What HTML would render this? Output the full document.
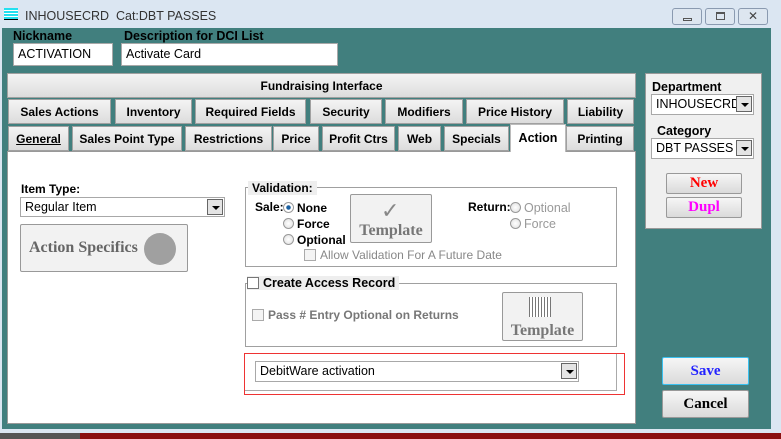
<!DOCTYPE html><html><head><style>
*{box-sizing:border-box}body{margin:0;width:781px;height:439px;overflow:hidden;background:#dbe6f2;font-family:"Liberation Sans",sans-serif;font-size:12px;position:relative}
.a{position:absolute}
.b{font-weight:bold}
.tab{position:absolute;height:25px;background:linear-gradient(#f4f4f4,#dcdcdc);border:1px solid #a0a0a0;font-weight:bold;font-size:12px;text-align:center;line-height:25px;color:#000;white-space:nowrap}
.inp{position:absolute;background:#fff;border:1px solid #a8a8a8;font-size:12.5px;padding-left:4px;line-height:18px}
.dd{position:absolute;right:1px;top:1px;width:16px;height:16px;border:1px solid #666;background:#e4e4e4}
.dd:after{content:"";position:absolute;left:4px;top:6px;border-left:4px solid transparent;border-right:4px solid transparent;border-top:4px solid #000}
.btn{position:absolute;border:1px solid #999;border-radius:2px;background:linear-gradient(#f6f6f6,#dadada);font-family:"Liberation Serif",serif;font-weight:bold;text-align:center}
.rad{display:inline-block;width:11px;height:11px;border-radius:50%;border:1px solid #999;background:radial-gradient(#fff,#ddd);vertical-align:-1px;margin-right:3px}
.chk{display:inline-block;width:12px;height:12px;border:1px solid #aaa;background:#f4f4f4;vertical-align:-2px;margin-right:4px}
.grp{position:absolute;border:1px solid #a0a0a0}
</style></head><body>
<div class="a" style="left:4px;top:8px;width:14px;height:12px;background:repeating-linear-gradient(#22e0f0 0 2px,#fff 2px 3px);border-bottom:1px solid #000"></div>
<div class="a" style="left:25px;top:9px;font-size:12.5px;color:#333">INHOUSECRD&nbsp; Cat:DBT PASSES</div>
<div class="a" style="left:672px;top:8px;width:30px;height:17px;border:1px solid #8a9ab0;border-radius:3px;background:#dde6f0"><div class="a" style="left:10px;top:9px;width:9px;height:3px;border:1px solid #555"></div></div>
<div class="a" style="left:705px;top:8px;width:30px;height:17px;border:1px solid #8a9ab0;border-radius:3px;background:#dde6f0"><div class="a" style="left:10px;top:3px;width:9px;height:8px;border:1px solid #555;border-top-width:2px"></div></div>
<div class="a" style="left:738px;top:8px;width:30px;height:17px;border:1px solid #8a9ab0;border-radius:3px;background:#dde6f0;text-align:center;font-size:12px;line-height:15px;color:#444">✕</div>
<div class="a" style="left:2px;top:28px;width:769px;height:401px;background:#417f7e"></div>
<div class="a" style="left:0;top:433px;width:781px;height:6px;background:#8a1010"></div>
<div class="a" style="left:0;top:433px;width:80px;height:6px;background:#555"></div>
<div class="a b" style="left:13px;top:29px;font-size:12.5px">Nickname</div>
<div class="a b" style="left:124px;top:29px;font-size:12.5px">Description for DCI List</div>
<div class="inp" style="left:13px;top:43px;width:100px;height:23px;line-height:21px">ACTIVATION</div>
<div class="inp" style="left:121px;top:43px;width:217px;height:23px;line-height:21px">Activate Card</div>
<div class="tab" style="left:7px;top:73px;width:629px;height:25px">Fundraising Interface</div>
<div class="tab" style="left:8px;top:99px;width:103px">Sales Actions</div>
<div class="tab" style="left:115px;top:99px;width:77px">Inventory</div>
<div class="tab" style="left:195px;top:99px;width:111px">Required Fields</div>
<div class="tab" style="left:310px;top:99px;width:72px">Security</div>
<div class="tab" style="left:385px;top:99px;width:78px">Modifiers</div>
<div class="tab" style="left:466px;top:99px;width:98px">Price History</div>
<div class="tab" style="left:567px;top:99px;width:67px">Liability</div>
<div class="tab" style="left:8px;top:126px;width:61px;text-decoration:underline">General</div>
<div class="tab" style="left:72px;top:126px;width:110px">Sales Point Type</div>
<div class="tab" style="left:185px;top:126px;width:87px">Restrictions</div>
<div class="tab" style="left:273px;top:126px;width:46px">Price</div>
<div class="tab" style="left:322px;top:126px;width:73px">Profit Ctrs</div>
<div class="tab" style="left:398px;top:126px;width:43px">Web</div>
<div class="tab" style="left:444px;top:126px;width:65px">Specials</div>
<div class="tab" style="left:566px;top:126px;width:68px">Printing</div>
<div class="a" style="left:7px;top:151px;width:629px;height:273px;background:#fff;border:1px solid #999"></div>
<div class="a b" style="left:510px;top:124px;width:56px;height:28px;background:#fff;text-align:center;line-height:26px;font-size:12.5px;border:1px solid #bbb;border-bottom:none">Action</div>
<div class="a b" style="left:21px;top:182px">Item Type:</div>
<div class="inp" style="left:20px;top:197px;width:205px;height:20px">Regular Item<div class="dd"></div></div>
<div class="btn" style="left:20px;top:224px;width:168px;height:48px;background:#f2f2f2;font-size:16px;color:#666;line-height:46px;text-align:left;padding-left:8px">Action Specifics<div class="a" style="left:123px;top:8px;width:32px;height:32px;border-radius:50%;background:#a0a0a0"></div></div>
<div class="grp" style="left:245px;top:187px;width:372px;height:80px"></div>
<div class="a b" style="left:248px;top:181px;background:#eee;padding:0 4px">Validation:</div>
<div class="a b" style="left:255px;top:200px">Sale:</div>
<div class="a b" style="left:283px;top:201px"><span class="rad" style="background:radial-gradient(#1a5fa0 30%,#fff 40%)"></span>None</div>
<div class="a b" style="left:283px;top:217px"><span class="rad"></span>Force</div>
<div class="a b" style="left:283px;top:233px"><span class="rad"></span>Optional</div>
<div class="a" style="left:304px;top:248px;color:#888"><span class="chk"></span>Allow Validation For A Future Date</div>
<div class="btn" style="left:350px;top:194px;width:82px;height:49px;background:#f2f2f2;font-size:16px;color:#777;padding-top:27px">Template<div class="a" style="left:30px;top:4px;font-size:22px;color:#888;font-family:'DejaVu Sans'">✓</div></div>
<div class="a b" style="left:468px;top:200px">Return:</div>
<div class="a" style="left:510px;top:201px;color:#999;font-size:12.5px"><span class="rad"></span>Optional</div>
<div class="a" style="left:510px;top:217px;color:#999;font-size:12.5px"><span class="rad"></span>Force</div>
<div class="grp" style="left:245px;top:283px;width:372px;height:64px"></div>
<div class="a b" style="left:247px;top:276px;background:#eee;padding:0 4px 0 0;font-size:12.5px"><span class="chk" style="background:#fff;border-color:#777"></span>Create Access Record</div>
<div class="a b" style="left:252px;top:308px;color:#777"><span class="chk"></span>Pass # Entry Optional on Returns</div>
<div class="btn" style="left:502px;top:292px;width:81px;height:49px;background:#f2f2f2;font-size:16px;color:#777;padding-top:29px">Template<div class="a" style="left:26px;top:4px;width:22px;height:20px;background:repeating-linear-gradient(90deg,#777 0 1px,#fff 1px 3px)"></div></div>
<div class="a" style="left:244px;top:353px;width:381px;height:42px;border:1px solid #e33"></div>
<div class="a" style="left:245px;top:354px;width:372px;height:37px;border:1px solid #aaa;border-top:none;border-left:none"></div>
<div class="inp" style="left:255px;top:361px;height:21px;width:324px;line-height:19px">DebitWare activation<div class="dd" style="top:1px"></div></div>
<div class="a" style="left:645px;top:73px;width:117px;height:156px;background:#f0f0f0;border:1px solid #999"></div>
<div class="a b" style="left:652px;top:80px;font-size:12.5px">Department</div>
<div class="inp" style="left:651px;top:94px;width:103px;height:21px;overflow:hidden;white-space:nowrap">INHOUSECRD<div class="dd" style="background:#e4e4e4"></div></div>
<div class="a b" style="left:657px;top:124px;font-size:12.5px">Category</div>
<div class="inp" style="left:651px;top:138px;width:103px;height:21px">DBT PASSES<div class="dd"></div></div>
<div class="btn" style="left:666px;top:173px;width:76px;height:21px;color:#f00;font-size:15px;line-height:19px">New</div>
<div class="btn" style="left:666px;top:197px;width:76px;height:21px;color:#f0f;font-size:15px;line-height:19px">Dupl</div>
<div class="btn" style="left:662px;top:357px;width:87px;height:28px;color:#22f;font-size:15px;line-height:26px;border-color:#3ac0f0">Save</div>
<div class="btn" style="left:662px;top:390px;width:87px;height:28px;color:#000;font-size:15px;line-height:26px">Cancel</div>
</body></html>
